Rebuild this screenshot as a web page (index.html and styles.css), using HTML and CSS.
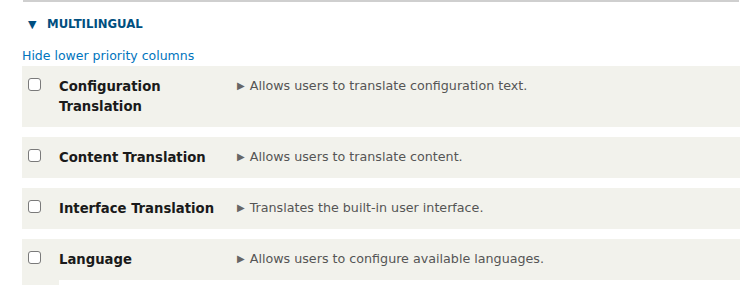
FILE: index.html
```html
<!DOCTYPE html>
<html>
<head>
<meta charset="utf-8">
<link rel="stylesheet" href="styles.css">
</head>
<body>
<div class="page">
  <div class="topline"></div>
  <div class="summary"><span class="caret">▼</span><span class="legend">MULTILINGUAL</span></div>
  <a class="toggle" href="#">Hide lower priority columns</a>
  <div class="rows">
    <div class="row">
      <div class="cb"><input type="checkbox"></div>
      <div class="name">Configuration<br>Translation</div>
      <div class="desc"><span class="tri">▶</span>Allows users to translate configuration text.</div>
    </div>
    <div class="row">
      <div class="cb"><input type="checkbox"></div>
      <div class="name">Content Translation</div>
      <div class="desc"><span class="tri">▶</span>Allows users to translate content.</div>
    </div>
    <div class="row">
      <div class="cb"><input type="checkbox"></div>
      <div class="name">Interface Translation</div>
      <div class="desc"><span class="tri">▶</span>Translates the built-in user interface.</div>
    </div>
    <div class="row">
      <div class="cb"><input type="checkbox"></div>
      <div class="name">Language</div>
      <div class="desc"><span class="tri">▶</span>Allows users to configure available languages.</div>
    </div>
    <div class="stub"></div>
  </div>
</div>
</body>
</html>
```
FILE: styles.css
```css
html, body {
  margin: 0;
  padding: 0;
  background: #fff;
}
body {
  font-family: "DejaVu Sans", Verdana, sans-serif;
  color: #222;
}
.page {
  width: 718px;
  margin-left: 22px;
}
.topline {
  height: 2px;
  margin: 0 1px;
  background: #cfcfcf;
}
.summary {
  display: flex;
  align-items: center;
  height: 20px;
  margin-top: 12px;
  padding-left: 6px;
  color: #004f80;
  font-weight: bold;
  font-size: 11.7px;
}
.caret {
  font-size: 11px;
  width: 19px;
}
.toggle {
  display: block;
  margin-top: 13px;
  font-size: 12.5px;
  line-height: 18px;
  color: #0074bd;
  text-decoration: none;
}
.rows {
  display: flex;
  flex-direction: column;
  gap: 10px;
  margin-top: 1px;
}
.row {
  display: flex;
  align-items: flex-start;
  background: #f2f2ec;
  padding: 10px 0 11px;
}
.cb {
  width: 37px;
  flex: none;
  padding-top: 2px;
  padding-left: 6px;
  box-sizing: border-box;
}
.cb input {
  appearance: none;
  -webkit-appearance: none;
  display: block;
  margin: 0;
  width: 13px;
  height: 13px;
  border: 1px solid #7a7a7a;
  border-radius: 3px;
  background: #fff;
  box-sizing: border-box;
}
.name {
  width: 178px;
  flex: none;
  font-family: "DejaVu Sans Condensed", "DejaVu Sans", sans-serif;
  font-weight: bold;
  font-size: 14.7px;
  line-height: 20px;
  color: #1a1a1a;
}
.desc {
  font-size: 12.7px;
  line-height: 20px;
  color: #555;
}
.tri {
  font-size: 10px;
  color: #666;
  margin-right: 5px;
  vertical-align: 1px;
}
.stub {
  width: 37px;
  height: 5px;
  margin-top: -10px;
  background: #f2f2ec;
}
```
